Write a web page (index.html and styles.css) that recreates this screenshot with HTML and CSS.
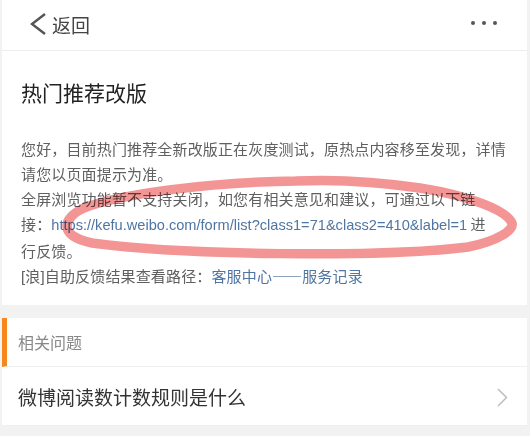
FILE: index.html
```html
<!DOCTYPE html>
<html lang="zh">
<head>
<meta charset="utf-8">
<link rel="stylesheet" href="styles.css">
</head>
<body>
<div class="app">
  <header class="topbar">
    <div class="back">
      <svg class="back-icon" width="18" height="22" viewBox="0 0 18 22"><polyline points="15,1 2,11 15,21" fill="none" stroke="#555" stroke-width="2.4" stroke-linejoin="miter"/></svg>
      <span class="back-text">返回</span>
    </div>
    <div class="more"><i></i><i></i><i></i></div>
  </header>
  <section class="card">
    <h1 class="title">热门推荐改版</h1>
    <p class="body">您好，目前热门推荐全新改版正在灰度测试，原热点内容移至发现，详情<br>请您以页面提示为准。<br>全屏浏览功能暂不支持关闭，如您有相关意见和建议，可通过以下链<br>接：<span class="link url">https://kefu.weibo.com/form/list?class1=71&amp;class2=410&amp;label=1</span> 进<br>行反馈。<br><span class="latin">[</span>浪<span class="latin">]</span>自助反馈结果查看路径：<span class="link">客服中心——服务记录</span></p>
  </section>
  <section class="related">
    <div class="related-head">相关问题</div>
    <div class="related-item">
      <span>微博阅读数计数规则是什么</span>
      <svg class="chev" width="11" height="19" viewBox="0 0 11 19"><polyline points="1,1 9.5,9.5 1,18" fill="none" stroke="#bdbdbd" stroke-width="1.5"/></svg>
    </div>
  </section>
</div>
<svg class="scribble" width="530" height="436" viewBox="0 0 530 436">
  <path d="M 296 181 C 210 182, 120 194, 84 208 C 62 218, 58 236, 92 243 C 180 255, 380 258, 468 247 C 498 241, 514 230, 512 223 C 506 210, 470 196, 420 188 C 380 182, 340 179, 296 181" fill="none" stroke="#f28a8a" stroke-width="9.5" stroke-linecap="round" stroke-linejoin="round"/>
</svg>
</body>
</html>
```
FILE: styles.css
```css
html, body {
  margin: 0;
  padding: 0;
}
body {
  background: #f2f2f2;
  width: 530px;
  height: 436px;
  overflow: hidden;
  position: relative;
  font-family: "Noto Sans CJK SC", sans-serif;
}
.app {
  margin-left: 2px;
  width: 525px;
  display: flex;
  flex-direction: column;
}
.topbar {
  background: #fff;
  height: 50px;
  border-bottom: 1px solid #ededed;
  display: flex;
  align-items: center;
  justify-content: space-between;
  padding: 0 30px 0 28px;
}
.back {
  display: flex;
  align-items: center;
  gap: 4px;
  margin-top: -2px;
}
.back-text {
  font-size: 19px;
  color: #444;
}
.more {
  display: flex;
  gap: 7px;
  margin-top: -4px;
}
.more i {
  display: block;
  width: 4px;
  height: 4px;
  border-radius: 50%;
  background: #555;
}
.card {
  background: #fff;
  padding: 26px 19px 18px 19px;
  height: 210px;
}
.title {
  margin: 0;
  font-size: 21px;
  line-height: 30px;
  font-weight: 400;
  color: #222;
}
.body {
  margin: 29px 0 0 0;
  font-size: 15px;
  letter-spacing: 0.15px;
  line-height: 25px;
  color: #606060;
  white-space: nowrap;
}
.latin {
  font-family: "Liberation Sans", sans-serif;
}
.link {
  color: #4f75a3;
}
.url {
  font-family: "Liberation Sans", sans-serif;
  font-size: 14.6px;
  letter-spacing: 0;
}
.related {
  margin-top: 13px;
  background: #fff;
}
.related-head {
  height: 48px;
  border-bottom: 1px solid #efefef;
  border-left: 5px solid #f7861c;
  padding-left: 11px;
  display: flex;
  align-items: center;
  font-size: 16px;
  color: #888;
}
.related-item {
  height: 58px;
  border-bottom: 1px solid #efefef;
  display: flex;
  align-items: center;
  justify-content: space-between;
  padding: 0 19px 0 16px;
  font-size: 19px;
  color: #333;
}
.chev {
  margin-top: 2px;
}
.scribble {
  position: absolute;
  top: 0;
  left: 0;
  pointer-events: none;
  mix-blend-mode: multiply;
  opacity: 0.9;
}
```
